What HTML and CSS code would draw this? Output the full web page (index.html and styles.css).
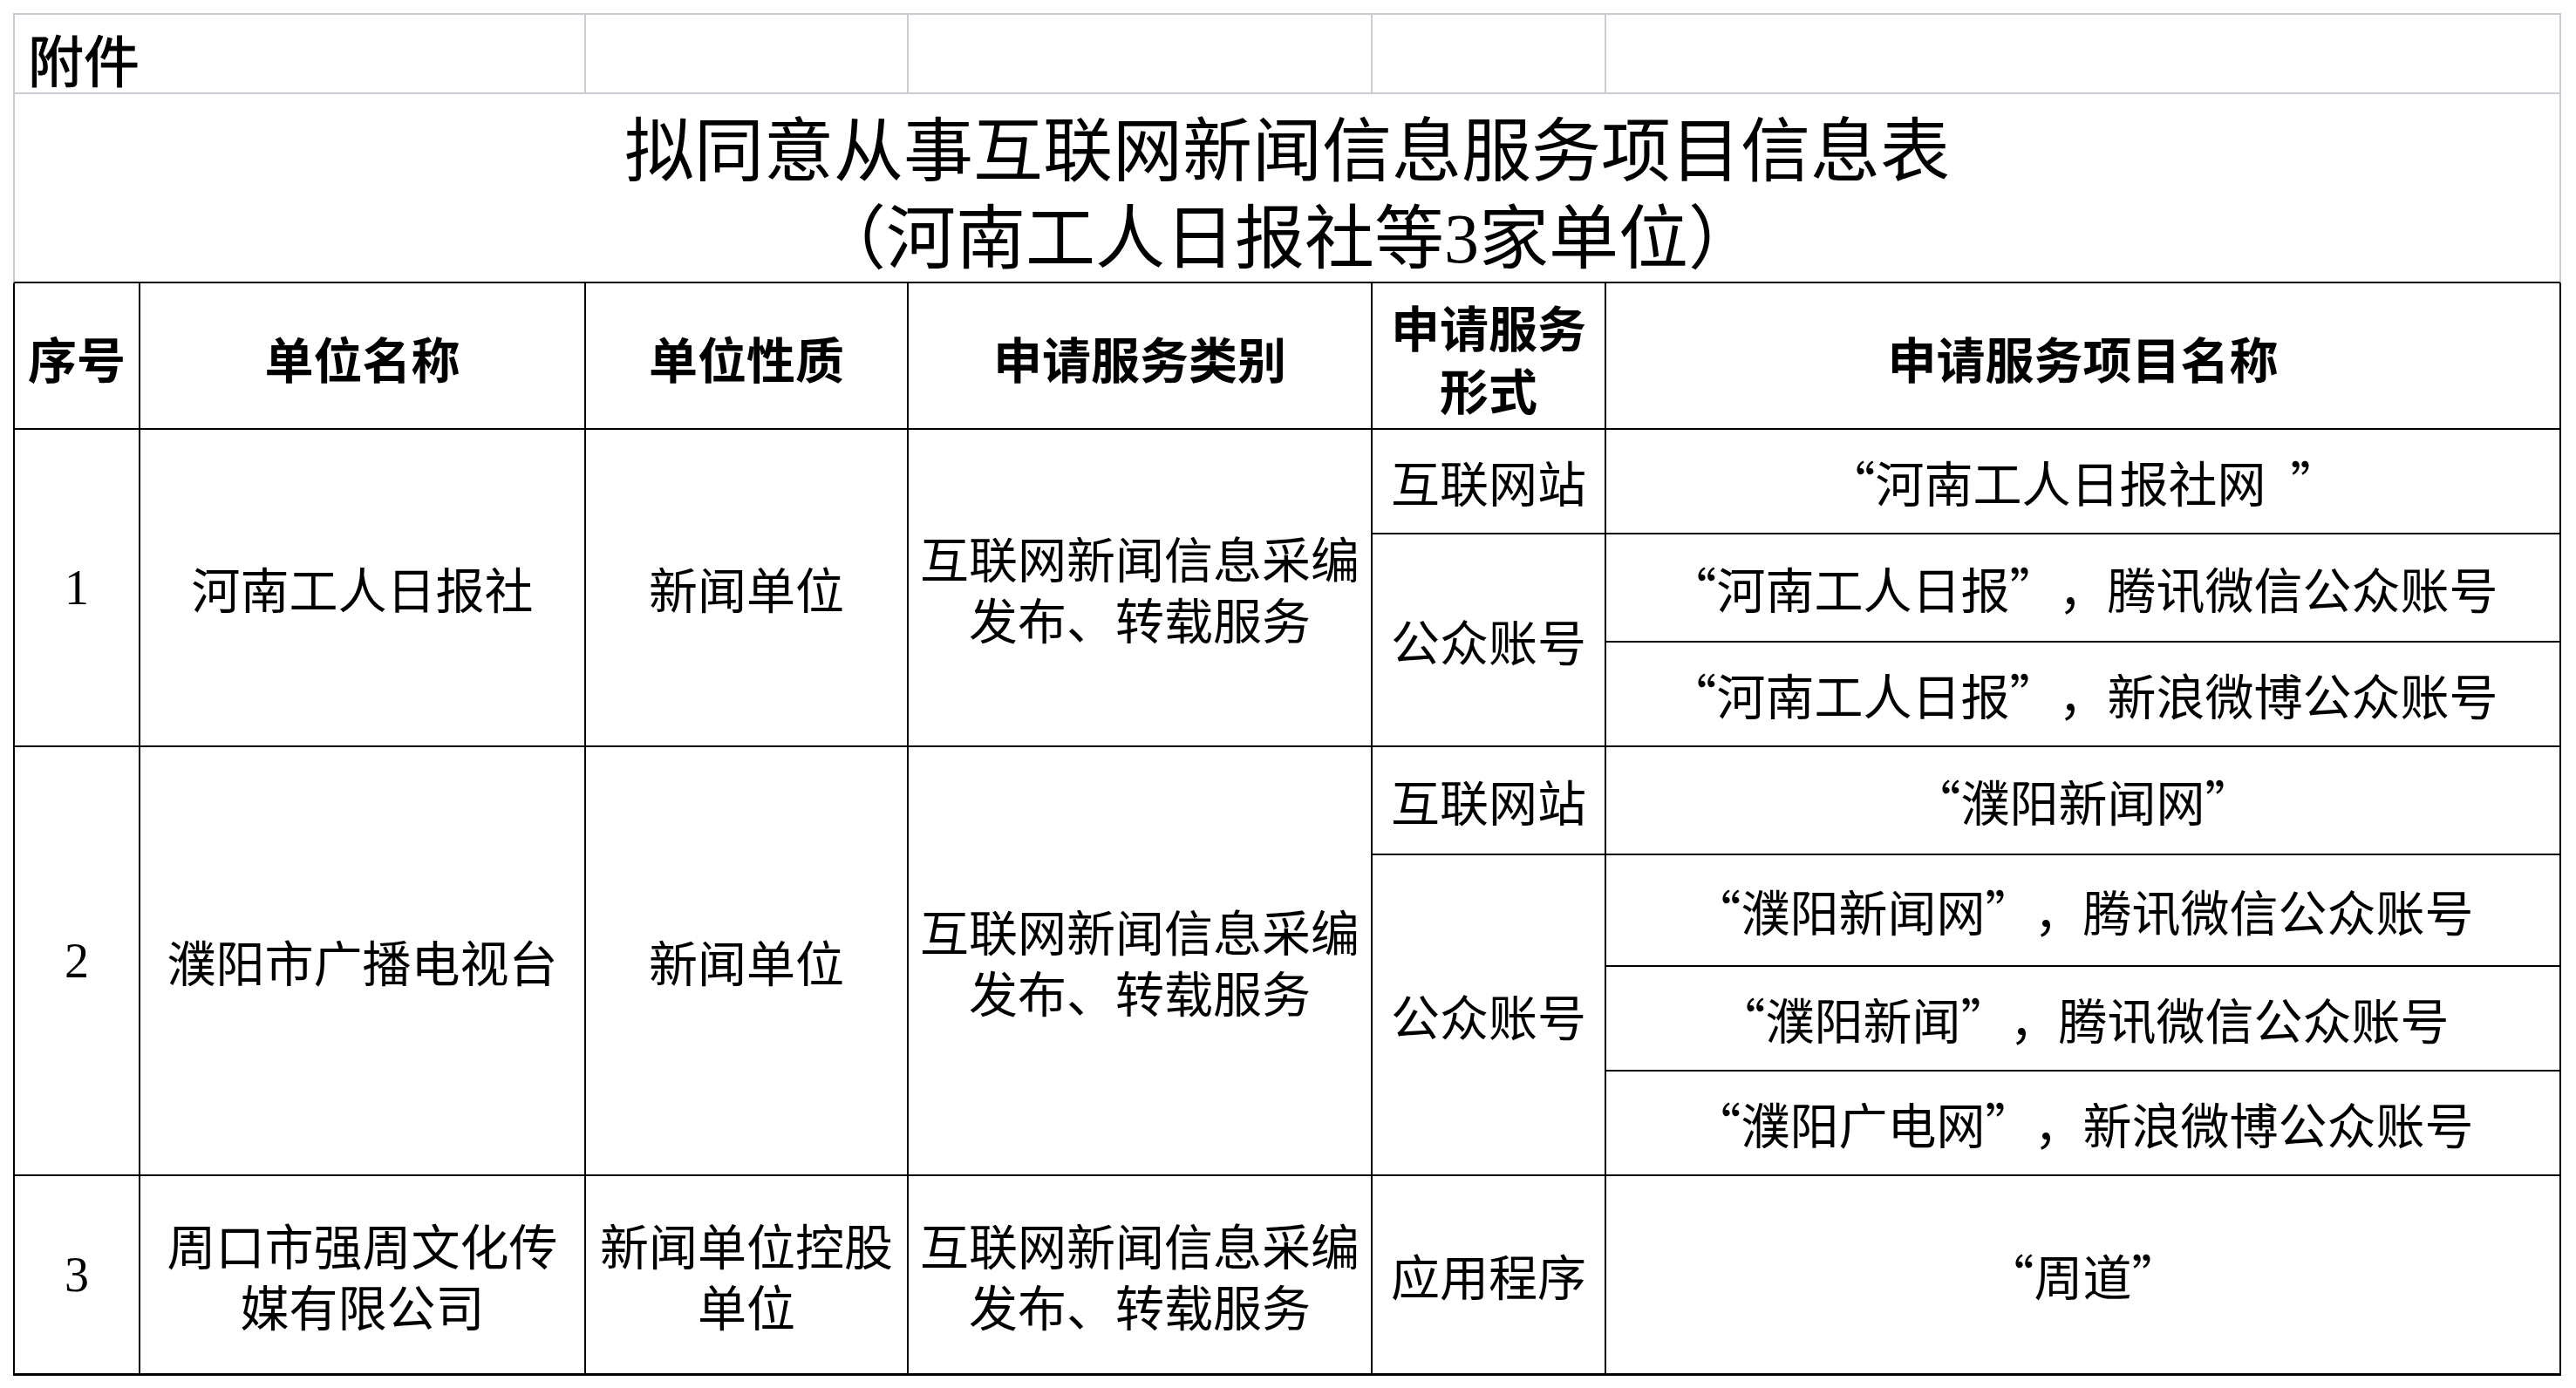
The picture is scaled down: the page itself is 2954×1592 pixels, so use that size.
FILE: index.html
```html
<!DOCTYPE html>
<html lang="zh-CN">
<head>
<meta charset="utf-8">
<title>拟同意从事互联网新闻信息服务项目信息表</title>
<link rel="stylesheet" href="styles.css">
</head>
<body>
<div class="sheet" role="table">
  <div class="cell grey first span2 attach" role="cell"><span class="txt">附件</span></div>
  <div class="cell grey" role="cell"></div>
  <div class="cell grey" role="cell"></div>
  <div class="cell grey" role="cell"></div>
  <div class="cell grey" role="cell"></div>

  <div class="cell title span6" role="cell"><div class="txt">拟同意从事互联网新闻信息服务项目信息表<br>（河南工人日报社等<span class="num">3</span>家单位）</div></div>

  <div class="cell head first" role="columnheader"><span class="txt">序号</span></div>
  <div class="cell head" role="columnheader"><span class="txt">单位名称</span></div>
  <div class="cell head" role="columnheader"><span class="txt">单位性质</span></div>
  <div class="cell head" role="columnheader"><span class="txt">申请服务类别</span></div>
  <div class="cell head" role="columnheader"><div class="txt">申请服务<br>形式</div></div>
  <div class="cell head" role="columnheader"><span class="txt">申请服务项目名称</span></div>

  <div class="cell first rows3 num" role="cell"><span class="txt">1</span></div>
  <div class="cell rows3" role="cell"><span class="txt">河南工人日报社</span></div>
  <div class="cell rows3" role="cell"><span class="txt">新闻单位</span></div>
  <div class="cell rows3" role="cell"><div class="txt">互联网新闻信息采编<br>发布、转载服务</div></div>
  <div class="cell" role="cell"><span class="txt">互联网站</span></div>
  <div class="cell" role="cell"><span class="txt"><span class="ql">“</span>河南工人日报社网<span class="qr sp">”</span></span></div>
  <div class="cell rows2" role="cell"><span class="txt">公众账号</span></div>
  <div class="cell" role="cell"><span class="txt"><span class="ql">“</span>河南工人日报<span class="qr">”</span>，腾讯微信公众账号</span></div>
  <div class="cell" role="cell"><span class="txt"><span class="ql">“</span>河南工人日报<span class="qr">”</span>，新浪微博公众账号</span></div>

  <div class="cell first rows4 num" role="cell"><span class="txt">2</span></div>
  <div class="cell rows4" role="cell"><span class="txt">濮阳市广播电视台</span></div>
  <div class="cell rows4" role="cell"><span class="txt">新闻单位</span></div>
  <div class="cell rows4" role="cell"><div class="txt">互联网新闻信息采编<br>发布、转载服务</div></div>
  <div class="cell" role="cell"><span class="txt">互联网站</span></div>
  <div class="cell" role="cell"><span class="txt"><span class="ql">“</span>濮阳新闻网<span class="qr">”</span></span></div>
  <div class="cell rows3" role="cell"><span class="txt">公众账号</span></div>
  <div class="cell" role="cell"><span class="txt"><span class="ql">“</span>濮阳新闻网<span class="qr">”</span>，腾讯微信公众账号</span></div>
  <div class="cell" role="cell"><span class="txt"><span class="ql">“</span>濮阳新闻<span class="qr">”</span>，腾讯微信公众账号</span></div>
  <div class="cell" role="cell"><span class="txt"><span class="ql">“</span>濮阳广电网<span class="qr">”</span>，新浪微博公众账号</span></div>

  <div class="cell first last num" role="cell"><span class="txt">3</span></div>
  <div class="cell last" role="cell"><div class="txt">周口市强周文化传<br>媒有限公司</div></div>
  <div class="cell last" role="cell"><div class="txt">新闻单位控股<br>单位</div></div>
  <div class="cell last" role="cell"><div class="txt">互联网新闻信息采编<br>发布、转载服务</div></div>
  <div class="cell last" role="cell"><span class="txt">应用程序</span></div>
  <div class="cell last" role="cell"><span class="txt"><span class="ql">“</span>周道<span class="qr">”</span></span></div>
</div>
</body>
</html>
```
FILE: styles.css
```css
html, body {
  margin: 0;
  padding: 0;
  background: #ffffff;
}

body {
  font-family: "Noto Sans CJK SC", "Noto Sans", sans-serif;
  color: #000000;
}

.sheet {
  display: grid;
  grid-template-columns: 146px 511px 370px 532px 268px 1095px;
  grid-template-rows: 93px 217px 168px 120px 124px 120px 124px 128px 120px 120px 229px;
  margin: 15px 0 0 15px;
  width: 2922px;
}

.cell {
  box-sizing: border-box;
  border-right: 2px solid #000;
  border-bottom: 2px solid #000;
  display: flex;
  align-items: center;
  justify-content: center;
  text-align: center;
  font-size: 56px;
  line-height: 70px;
  white-space: nowrap;
}

.txt {
  display: block;
}

.ql,
.qr {
  display: inline-block;
  width: 1em;
}

.ql {
  text-align: right;
}

.qr {
  text-align: left;
}

.sp {
  margin-left: 0.5em;
}

.first {
  border-left: 2px solid #000;
}

.grey {
  border-top: 2px solid #cacbd7;
  border-right-color: #cacbd7;
  border-bottom-color: #cacbd7;
}

.grey.first {
  border-left-color: #cacbd7;
}

.span2 {
  grid-column: span 2;
}

.span6 {
  grid-column: span 6;
}

.rows2 {
  grid-row: span 2;
}

.rows3 {
  grid-row: span 3;
}

.rows4 {
  grid-row: span 4;
}

.attach {
  justify-content: flex-start;
  padding: 8px 0 0 15px;
  font-size: 64px;
  -webkit-text-stroke: 1px #000;
}

.title {
  border-left: 2px solid #cacbd7;
  border-right-color: #cacbd7;
  font-size: 80px;
  line-height: 100px;
  padding-top: 8px;
}

.head {
  font-weight: 700;
  line-height: 72px;
  padding-top: 4px;
}

.num {
  font-family: "Liberation Serif", "Noto Sans CJK SC", serif;
}

.last {
  border-bottom-width: 3px;
}
```
